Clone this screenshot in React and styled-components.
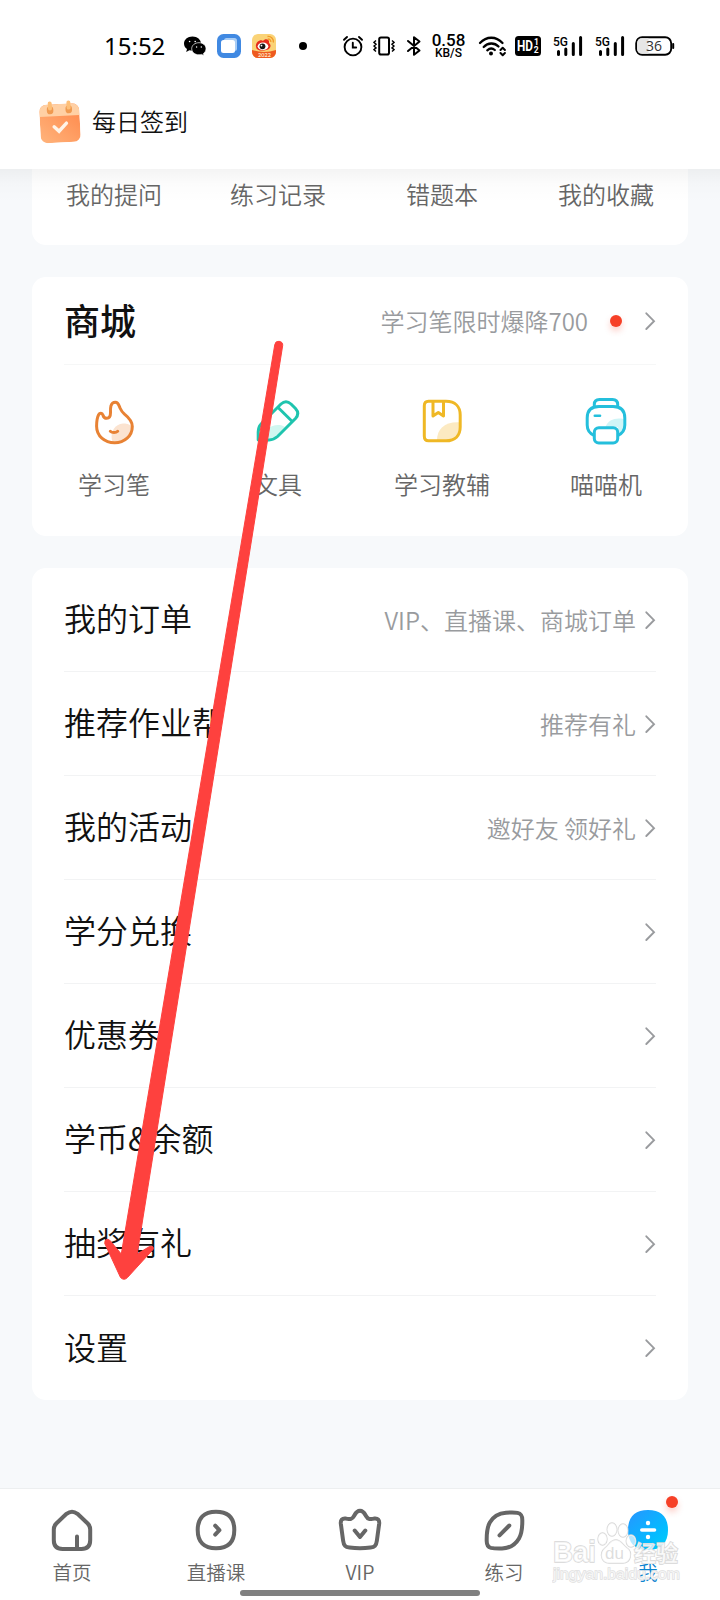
import React from 'react';
import styled, { createGlobalStyle } from 'styled-components';

const shortcuts = ['我的提问', '练习记录', '错题本', '我的收藏'];

const menu = [
  { title: '我的订单', hint: 'VIP、直播课、商城订单' },
  { title: '推荐作业帮', hint: '推荐有礼' },
  { title: '我的活动', hint: '邀好友 领好礼' },
  { title: '学分兑换' },
  { title: '优惠券' },
  { title: '学币&余额' },
  { title: '抽奖有礼' },
  { title: '设置' },
];

const Chevron = () => (
  <svg width="16" height="24" viewBox="0 0 16 24" fill="none">
    <path d="M6.3 4.3 L14 12.2 L6.3 20" stroke="#999b9e" strokeWidth="1.9" strokeLinecap="round" />
  </svg>
);

const Signal = () => (
  <StatusIcon $w={30} $h={22} $ml={12} viewBox="0 0 30 22">
    <text x="0" y="10.5" fontFamily="Roboto" fontSize="13" fontWeight="500" textLength="15" lengthAdjust="spacingAndGlyphs">
      5G
    </text>
    <path d="M5.5 16.5 V19.5 M12.8 14 V19.5 M20.3 8.5 V19.5 M27.6 2.5 V19.5" stroke="#000" strokeWidth="3" strokeLinecap="round" />
  </StatusIcon>
);

const Status = () => (
  <StatusBar>
    <Time>15:52</Time>
    <StatusIcon $w={24} $h={22} $ml={16} viewBox="0 0 24 22">
      <path d="M9.5 1.5 C4.5 1.5 1 4.7 1 8.6 C1 10.9 2.2 12.8 4 14.1 L3.2 17 L6.4 15.3 C7.4 15.6 8.3 15.8 9.5 15.8 C14.4 15.8 18 12.6 18 8.6 C18 4.7 14.4 1.5 9.5 1.5Z" />
      <path
        d="M16 7.7 C11.8 7.7 8.7 10.3 8.7 13.7 C8.7 17.1 11.8 19.8 16 19.8 C16.8 19.8 17.7 19.6 18.5 19.4 L21 20.6 L20.4 18.5 C22.1 17.3 23 15.6 23 13.7 C23 10.3 20 7.7 16 7.7Z"
        stroke="#fff"
        strokeWidth="0.7"
      />
      <g fill="#fff">
        <circle cx="6.6" cy="6.5" r="0.8" />
        <circle cx="12.2" cy="6.5" r="0.8" />
        <circle cx="13.6" cy="12" r="0.7" />
        <circle cx="18.3" cy="12" r="0.7" />
      </g>
    </StatusIcon>
    <StatusIcon $w={24} $h={24} $ml={10} viewBox="0 0 24 24">
      <rect width="24" height="24" rx="6.5" fill="#4089e2" />
      <rect x="7" y="4" width="13" height="13" rx="2.5" fill="#a9cdf5" />
      <rect x="4" y="6" width="14" height="13" rx="2.5" fill="#fff" />
    </StatusIcon>
    <StatusIcon $w={24} $h={24} $ml={11} viewBox="0 0 24 24">
      <defs>
        <clipPath id="weibo">
          <rect width="24" height="24" rx="6" />
        </clipPath>
      </defs>
      <g clipPath="url(#weibo)">
        <rect width="24" height="24" fill="#fad377" />
        <path d="M0 16 Q12 20 24 16 V24 H0Z" fill="#ee5a20" />
        <path d="M4 13 C3 8 9 5 11 7 C13 4 18 5 17 9 C20 11 19 16 12 16.5 C8 17 4.5 16 4 13Z" fill="#e52b1c" />
        <ellipse cx="11" cy="12.3" rx="5.3" ry="3.7" fill="#fff" />
        <circle cx="10.5" cy="12.3" r="2.9" fill="#151515" />
        <circle cx="9.5" cy="11.6" r="0.9" fill="#fff" />
        <path d="M15.5 2.5 C19 2 22 5 21.3 8.5 M15.8 5 C18 5 19 6.3 18.8 8" stroke="#f39a28" strokeWidth="1.3" fill="none" />
        <text x="6" y="22.8" fontSize="5.5" fontWeight="700" fontFamily="Lato" fill="#ffe6c4" textLength="13">
          2022
        </text>
      </g>
    </StatusIcon>
    <StatusIcon $w={8} $h={8} $ml={23} viewBox="0 0 8 8">
      <circle cx="4" cy="4" r="4" />
    </StatusIcon>
    <StatusIcon $w={22} $h={22} $ml={34.5} viewBox="0 0 22 22">
      <g fill="none" stroke="#000" strokeWidth="1.9" strokeLinecap="round">
        <circle cx="11" cy="12" r="8.4" />
        <path d="M2 4.8 L5 2 M17 2 L20 4.8 M10.8 7.8 V12.5 H14.2" />
      </g>
    </StatusIcon>
    <StatusIcon $w={22} $h={22} $ml={9.5} viewBox="0 0 22 22">
      <g fill="none" stroke="#000" strokeWidth="2">
        <rect x="6.2" y="2.5" width="9.8" height="17" rx="1.8" />
        <path
          d="M3 5.5 L1 7.3 L3 9.2 L1 11 L3 12.9 L1 14.7 L3 16.5 M19 5.5 L21 7.3 L19 9.2 L21 11 L19 12.9 L21 14.7 L19 16.5"
          strokeWidth="1.5"
        />
      </g>
    </StatusIcon>
    <StatusIcon $w={16} $h={22} $ml={11} viewBox="0 0 16 22">
      <path
        d="M2 6 L13.5 15.5 L8 19.8 V2.2 L13.5 6.5 L2 16"
        fill="none"
        stroke="#000"
        strokeWidth="2"
        strokeLinejoin="round"
        strokeLinecap="round"
      />
    </StatusIcon>
    <Speed>
      <b>0.58</b>
      <small>KB/S</small>
    </Speed>
    <StatusIcon $w={28} $h={22} $ml={11} viewBox="0 0 28 22">
      <g fill="none" stroke="#000" strokeWidth="2.3" strokeLinecap="round">
        <path d="M2 8 C8.5 1 18 1 24.5 8" />
        <path d="M5.7 12 C10 7.4 16.5 7.4 20.5 11.5" />
        <path d="M9.3 15.3 C11.8 13 14.5 13 16.8 15" />
      </g>
      <circle cx="13" cy="18.4" r="2" />
      <path
        d="M22.5 15 L24.7 12.8 L26.9 15 M22.5 18 L24.7 20.2 L26.9 18"
        fill="none"
        stroke="#000"
        strokeWidth="2"
        strokeLinejoin="round"
        strokeLinecap="round"
      />
    </StatusIcon>
    <StatusIcon $w={26} $h={20} $ml={9} viewBox="0 0 26 20">
      <rect width="26" height="20" rx="3.5" />
      <g fill="#fff" fontFamily="Roboto" fontWeight="700">
        <text x="2" y="15.2" fontSize="14.5" textLength="16" lengthAdjust="spacingAndGlyphs">
          HD
        </text>
        <text x="19" y="9.2" fontSize="8.5">
          1
        </text>
        <text x="18.8" y="17.2" fontSize="8.5">
          2
        </text>
      </g>
    </StatusIcon>
    <Signal />
    <Signal />
    <StatusIcon $w={40} $h={22} $ml={10.5} viewBox="0 0 40 22">
      <rect x="1.2" y="2.2" width="35" height="17.6" rx="6" fill="#fff" stroke="#000" strokeWidth="1.9" />
      <path d="M7 3.2 H13.5 V18.8 H7 Q2.2 18.8 2.2 14 V8 Q2.2 3.2 7 3.2Z" fill="#e6e6e6" />
      <rect x="37.2" y="8" width="2" height="6" rx="1" />
      <text x="11" y="16" fontFamily="Open Sans" fontWeight="400" fontSize="14" fill="#333" textLength="16">
        36
      </text>
    </StatusIcon>
  </StatusBar>
);

const CalendarIcon = () => (
  <svg width="48" height="48" viewBox="0 0 48 48">
    <defs>
      <linearGradient id="cal" x1="0" y1="1" x2="1" y2="0">
        <stop offset="0" stopColor="#ffb47c" />
        <stop offset="1" stopColor="#ff8749" />
      </linearGradient>
      <clipPath id="calBody">
        <rect x="4" y="6" width="40" height="38.5" rx="7" />
      </clipPath>
    </defs>
    <g transform="rotate(-3 24 26)">
      <g clipPath="url(#calBody)">
        <rect x="4" y="6" width="40" height="38.5" fill="url(#cal)" />
        <rect x="4" y="6" width="40" height="12" fill="#ffd0a4" />
      </g>
      <g strokeLinecap="round" fill="none">
        <path d="M14.8 12.5 V11" stroke="#f09a50" strokeWidth="6.5" />
        <path d="M33.5 12.5 V11" stroke="#f09a50" strokeWidth="6.5" />
        <path d="M14.8 10 V5 M33.5 10 V5" stroke="#fdbf78" strokeWidth="4" />
        <path d="M18 28.5 L22.7 33.2 L30.5 25.5" stroke="#fff4e8" strokeWidth="3.4" />
      </g>
    </g>
  </svg>
);

const FlameIcon = () => (
  <svg width="48" height="48" viewBox="0 0 48 48" fill="none">
    <path d="M22 42.5 C20 34 25 26 33 25.5 C37 25.3 41 27 41.5 29 C41 37.5 35 44 24 43.5Z" fill="#fbe3d0" />
    <path
      d="M25.3 4.3 C28.6 4.3 29 7.8 30 10 C31 12.2 31.8 13.8 34.5 16.2 C39.8 20.5 42.3 24 42.3 28.5 C42.3 38 34.5 44.8 24.7 44.8 C14.5 44.8 6.6 38 6.6 28.3 C6.6 24 7 19.8 8.6 16.8 C9.7 14.8 12.2 14.9 12.9 17 C13.3 18.5 14.2 20.3 16.8 20.3 C20 20.3 20.5 17.7 20.5 14.8 C20.4 11 20 4.3 25.3 4.3Z"
      stroke="#e88234"
      strokeWidth="3"
    />
    <path d="M20.3 33.3 C22 35 26 35 27.7 33.3" stroke="#e88234" strokeWidth="3" strokeLinecap="round" />
  </svg>
);

const PencilIcon = () => (
  <svg width="48" height="48" viewBox="0 0 48 48" fill="none">
    <path d="M9 40 C11 31 18 25.5 28 27.5 L31 29 L19.5 41Z" fill="#d0f7f0" />
    <g stroke="#1fc4ae" strokeWidth="3" strokeLinejoin="round">
      <path d="M4.2 42 V34 Q4.2 29 7.5 25.5 L27 6 Q32 1.5 37 6 L41.5 10.5 Q46 15.5 41.5 20.5 L23.5 38.5 Q20 41.8 15 41.9Z" />
      <path d="M23.8 9.3 L38 23.3" />
    </g>
  </svg>
);

const BookIcon = () => (
  <svg width="48" height="48" viewBox="0 0 48 48" fill="none">
    <path d="M19 42 C19 31 27 23.5 41.5 24.3 V31 Q40.5 41.5 30 42Z" fill="#fceac2" />
    <g stroke="#efb825" strokeWidth="3" strokeLinejoin="round">
      <path d="M10.5 3.3 H28 C37 3.3 42.2 8.5 42.2 17 V29 C42.2 37.5 37 42.8 28 42.8 H10.5 Q6.3 42.8 6.3 38 V7.8 Q6.3 3.3 10.5 3.3Z" />
      <path d="M15 3.3 V18 L20.3 14.5 L25.5 18 V3.3" />
    </g>
  </svg>
);

const PrinterIcon = () => (
  <svg width="48" height="48" viewBox="0 0 48 48" fill="none">
    <path d="M23.5 29 C26 22 33 19.5 41.5 21 V29 Q41 35 36 37 V29Z" fill="#cff5f7" />
    <g stroke="#24bfdc" strokeWidth="3" strokeLinecap="round">
      <path d="M12.3 8.5 V6.5 Q12.3 1.5 17.5 1.5 H30.5 Q35.7 1.5 35.7 6.5 V8.5" />
      <path d="M12.3 37.5 Q5.2 34.5 5.2 27 V20 Q5.2 8.5 17 8.5 H31 Q42.8 8.5 42.8 20 V27 Q42.8 34.5 35.7 37.5" />
      <rect x="12.3" y="29.7" width="23.4" height="15.3" rx="4.5" fill="#fff" />
      <path d="M12.8 17.7 H18" strokeWidth="2.6" />
    </g>
  </svg>
);

const store = [
  { name: '学习笔', icon: <FlameIcon /> },
  { name: '文具', icon: <PencilIcon /> },
  { name: '学习教辅', icon: <BookIcon /> },
  { name: '喵喵机', icon: <PrinterIcon /> },
];

const tabs = [
  {
    name: '首页',
    icon: (
      <path d="M18.5 7.8 L8.3 17.5 Q5.8 20 5.8 23.5 V34 Q5.8 43 14.5 43 H33.5 Q42.2 43 42.2 34 V23.5 Q42.2 20 39.7 17.5 L29.5 7.8 Q24 3.6 18.5 7.8Z M29 43 V30.5" />
    ),
  },
  {
    name: '直播课',
    icon: (
      <path d="M24 5.7 C36 5.7 42.3 12 42.3 24 C42.3 36 36 42.3 24 42.3 C12 42.3 5.7 36 5.7 24 C5.7 12 12 5.7 24 5.7Z M23.2 19.7 L27.4 24.2 L23.2 28.6" />
    ),
  },
  {
    name: 'VIP',
    icon: (
      <path d="M24 4.8 C27.5 4.8 28.5 7.3 30 10 C32.5 14.3 34.5 13 38.5 12.6 C42 12.3 43.5 14 43.2 17.5 L40.9 34.5 C40.2 40 38.5 41 34.5 41.6 C28 42.5 20 42.5 13.5 41.6 C9.5 41 7.8 40 7.1 34.5 L4.8 17.5 C4.5 14 6 12.3 9.5 12.6 C13.5 13 15.5 14.3 18 10 C19.5 7.3 20.5 4.8 24 4.8Z M18.7 24.5 L24 31 L29.3 24.5" />
    ),
  },
  {
    name: '练习',
    icon: (
      <path d="M26 6.7 C31 6.3 35 6.3 37.5 6.9 C41.5 7.8 42.3 10 42.3 14 C42.4 21 41.9 27.5 39 32.5 C35.5 38.5 29.5 42.3 22 42.5 C18 42.6 14 42.6 11 41.9 C7.5 41 6.7 38.5 6.7 35 C6.6 29 7 21.5 9.8 16.5 C13.3 10.3 18.5 7.3 26 6.7Z M19.5 29.3 L29.3 19.5" />
    ),
  },
];

const Arrow = () => (
  <ArrowLayer viewBox="0 0 200 960">
    <path
      d="M174.8 24.5 Q175.5 21 179 21.3 Q183 21.8 182.7 25.5 L37.2 934 L49.5 926.5 Q54.5 925.5 53 929.5 L27.5 957.5 Q24 961 20.5 957.5 L4.8 923.5 Q5 917.5 9.5 920 L21.3 934Z"
      fill="#fe413e"
      stroke="#fe413e"
      strokeLinejoin="round"
    />
  </ArrowLayer>
);

const Watermark = () => (
  <WatermarkLayer viewBox="0 0 136 64">
    <g fill="#fff" fillOpacity="0.7" stroke="#d6d6d6" strokeWidth="1.3" paintOrder="stroke">
      <text x="1" y="41" fontFamily="Liberation Sans" fontWeight="700" fontSize="29" textLength="43" lengthAdjust="spacingAndGlyphs">
        Bai
      </text>
      <ellipse cx="50.5" cy="18" rx="4.5" ry="6" />
      <ellipse cx="60" cy="8.5" rx="4.8" ry="6.5" />
      <ellipse cx="71" cy="9.5" rx="4.8" ry="6.5" />
      <ellipse cx="79" cy="20" rx="4.8" ry="6" />
      <path d="M64 19 C69 19 71 24 75 27 C81 31 79 42 71 42 C67 42 61 42 57 42 C49 42 47 32 53 27 C57 24 58 19 64 19Z" />
      <text x="53" y="38" fontFamily="Liberation Sans" fontSize="17" textLength="19" fill="#cfcfcf" stroke="none">
        du
      </text>
      <text x="82" y="39.5" fontFamily="Noto Sans CJK SC" fontWeight="700" fontSize="22" textLength="44">
        经验
      </text>
      <text x="1" y="57.5" fontFamily="Liberation Sans" fontWeight="400" fontSize="15" textLength="127" lengthAdjust="spacingAndGlyphs" stroke="#e0e0e0">
        jingyan.baidu.com
      </text>
    </g>
  </WatermarkLayer>
);

const App = () => {
  return (
    <Page>
      <GlobalStyle />
      <Header>
        <Status />
        <CheckIn>
          <CalendarIcon />
          <span>每日签到</span>
        </CheckIn>
      </Header>
      <Content>
        <Shortcuts>
          {shortcuts.map((name) => (
            <p key={name}>{name}</p>
          ))}
        </Shortcuts>
        <Card>
          <StoreHeader>
            <h2>商城</h2>
            <Hint>学习笔限时爆降700</Hint>
            <RedDot />
            <Chevron />
          </StoreHeader>
          <StoreGrid>
            {store.map(({ name, icon }) => (
              <StoreItem key={name}>
                {icon}
                <p>{name}</p>
              </StoreItem>
            ))}
          </StoreGrid>
        </Card>
        <Card>
          {menu.map(({ title, hint }) => (
            <MenuRow key={title}>
              <p>{title}</p>
              {hint && <Hint>{hint}</Hint>}
              <Chevron />
            </MenuRow>
          ))}
        </Card>
      </Content>
      <TabBar>
        {tabs.map(({ name, icon }) => (
          <Tab key={name}>
            <svg
              width="48"
              height="48"
              viewBox="0 0 48 48"
              fill="none"
              stroke="#666"
              strokeWidth="4"
              strokeLinecap="round"
              strokeLinejoin="round"
            >
              {icon}
            </svg>
            <span>{name}</span>
          </Tab>
        ))}
        <Tab $active>
          <svg width="48" height="48" viewBox="0 0 48 48">
            <defs>
              <linearGradient id="me" x1="0" y1="0" x2="0.9" y2="1">
                <stop offset="0" stopColor="#2795ff" />
                <stop offset="0.7" stopColor="#04bcff" />
                <stop offset="1" stopColor="#00cdf8" />
              </linearGradient>
            </defs>
            <path
              d="M24 4 C37 4 44 11 44 24 C44 37 37 44 24 44 C11 44 4 37 4 24 C4 11 11 4 24 4Z"
              fill="url(#me)"
            />
            <path d="M17.8 24 H30.5" stroke="#fff" strokeWidth="3.6" strokeLinecap="round" />
            <circle cx="24" cy="17" r="2.2" fill="#fff" />
            <circle cx="24" cy="31" r="2.2" fill="#fff" />
          </svg>
          <span>我</span>
          <TabBadge />
        </Tab>
        <HomeIndicator />
        <Watermark />
      </TabBar>
      <Arrow />
    </Page>
  );
};

const GlobalStyle = createGlobalStyle`
  * {
    box-sizing: border-box;
  }
  body {
    margin: 0;
    background: #f7f9fb;
    font-family: 'Noto Sans CJK SC', sans-serif;
    font-weight: 350;
  }
  p,
  h2 {
    margin: 0;
  }
  svg {
    display: block;
    flex-shrink: 0;
  }
`;

const Page = styled.div`
  position: relative;
  display: flex;
  flex-direction: column;
  width: 720px;
  height: 1600px;
  overflow: hidden;
  background: #f7f9fb;
`;

const Header = styled.header`
  position: relative;
  z-index: 1;
  flex-shrink: 0;
  height: 169px;
  background: #fff;
  /* soft shade cast on the scrolled content */
  &::after {
    content: '';
    position: absolute;
    top: 100%;
    left: 0;
    width: 100%;
    height: 34px;
    background: linear-gradient(rgba(0, 0, 0, 0.045), rgba(0, 0, 0, 0.013) 45%, rgba(0, 0, 0, 0));
  }
`;

const StatusBar = styled.div`
  display: flex;
  align-items: center;
  height: 92px;
  padding-left: 104px;
`;

const Time = styled.span`
  width: 63px;
  font-family: 'Noto Sans', sans-serif;
  font-size: 24px;
  font-weight: 400;
  line-height: 24px;
  color: #000;
`;

const StatusIcon = styled.svg`
  width: ${({ $w }) => $w}px;
  height: ${({ $h }) => $h}px;
  margin-left: ${({ $ml }) => $ml}px;
`;

const Speed = styled.div`
  display: flex;
  flex-direction: column;
  align-items: center;
  width: 36px;
  margin-left: 8.5px;
  font-family: Roboto, sans-serif;
  color: #000;
  b {
    font-size: 17px;
    font-weight: 500;
    line-height: 14px;
  }
  small {
    font-size: 12px;
    font-weight: 500;
    line-height: 12px;
  }
`;

const CheckIn = styled.div`
  display: flex;
  align-items: center;
  height: 60px;
  padding-left: 36px;
  span {
    margin: -2px 0 0 8px;
    font-size: 24px;
    line-height: 36px;
    color: #111;
  }
`;

const Content = styled.main`
  display: flex;
  flex: 1;
  flex-direction: column;
  gap: 32px;
  padding: 0 32px;
`;

const Card = styled.section`
  border-radius: 14px;
  background: #fff;
`;

const Shortcuts = styled(Card)`
  display: grid;
  grid-template-columns: repeat(4, 1fr);
  height: 76px;
  padding-top: 7px;
  border-radius: 0 0 14px 14px;
  text-align: center;
  p {
    font-size: 24px;
    line-height: 36px;
    color: #666;
  }
`;

const StoreHeader = styled.div`
  display: flex;
  align-items: center;
  height: 88px;
  margin: 0 32px;
  border-bottom: 1px solid #f6f7f7;
  h2 {
    margin: -4px auto 0 0;
    font-size: 36px;
    font-weight: 500;
    line-height: 48px;
    color: #111;
  }
`;

const Hint = styled.span`
  margin-right: 4px;
  font-size: 24px;
  line-height: 36px;
  color: #999b9e;
`;

const RedDot = styled.i`
  width: 12px;
  height: 12px;
  margin: 1px 18px 0 18px;
  border-radius: 50%;
  background: #f64027;
  box-shadow: 0 4px 6px rgba(246, 64, 39, 0.25);
`;

const StoreGrid = styled.div`
  display: grid;
  grid-template-columns: repeat(4, 1fr);
  height: 171px;
  padding-top: 33px;
`;

const StoreItem = styled.div`
  display: flex;
  flex-direction: column;
  align-items: center;
  p {
    margin-top: 20px;
    font-size: 24px;
    line-height: 36px;
    color: #666;
  }
`;

const MenuRow = styled.div`
  display: flex;
  align-items: center;
  height: 104px;
  margin: 0 32px;
  border-bottom: 1px solid #f2f3f4;
  &:last-child {
    border-bottom: none;
  }
  p {
    margin: -5px auto 0 0;
    font-size: 32px;
    line-height: 48px;
    color: #111;
  }
`;

const TabBar = styled.nav`
  position: relative;
  display: grid;
  grid-template-columns: repeat(5, 1fr);
  height: 112px;
  border-top: 1px solid #edeff0;
  background: #fff;
`;

const Tab = styled.div`
  position: relative;
  display: flex;
  flex-direction: column;
  align-items: center;
  padding-top: 17px;
  span {
    margin-top: 4px;
    font-size: 19.5px;
    line-height: 28px;
    color: ${({ $active }) => ($active ? '#0d84cf' : '#666')};
  }
`;

const TabBadge = styled(RedDot)`
  position: absolute;
  top: 7px;
  left: 90px;
  margin: 0;
`;

const HomeIndicator = styled.div`
  position: absolute;
  bottom: 4px;
  left: 240px;
  width: 240px;
  height: 6px;
  border-radius: 3px;
  background: #808080;
`;

const WatermarkLayer = styled.svg`
  position: absolute;
  top: 32px;
  left: 552px;
  width: 136px;
  height: 64px;
`;

const ArrowLayer = styled.svg`
  position: absolute;
  top: 320px;
  left: 100px;
  z-index: 2;
  width: 200px;
  height: 960px;
`;

export default App;
